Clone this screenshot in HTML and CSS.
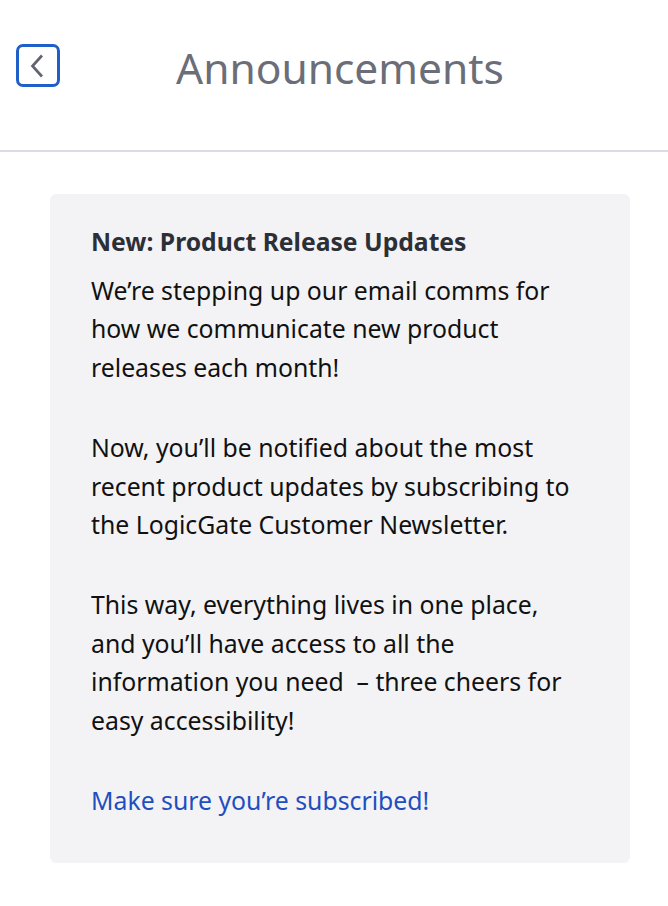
FILE: index.html
```html
<!DOCTYPE html>
<html lang="en">
<head>
    <meta charset="UTF-8">
    <meta name="viewport" content="width=device-width, initial-scale=1.0">
    <title>Announcements</title>
    <link rel="stylesheet" href="styles.css">
</head>
<body>
    <header class="topo">
        <button class="voltar" aria-label="Back">
            <svg width="14" height="24" viewBox="0 0 14 24">
                <path d="M12 1.5 L2.5 12 L12 22.5" fill="none" stroke="#62656f" stroke-width="2.7"/>
            </svg>
        </button>
        <h1>Announcements</h1>
    </header>

    <div class="cartao">
        <h2>New: Product Release Updates</h2>
        <p>We’re stepping up our email comms for how we communicate new product releases each month!</p>
        <p>Now, you’ll be notified about the most recent product updates by subscribing to the LogicGate Customer Newsletter.</p>
        <p>This way, everything lives in one place, and you’ll have access to all the information you need &nbsp;– three cheers for easy accessibility!</p>
        <p><a href="#">Make sure you’re subscribed!</a></p>
    </div>
</body>
</html>
```

FILE: styles.css
```css
body {
    margin: 0;
    font-family: "Noto Sans", sans-serif;
    background-color: #fff;
}
.topo {
    height: 150px;
    border-bottom: 2px solid #dcdde3;
    display: flex;
    align-items: flex-start;
    position: relative;
}
.voltar {
    margin: 44px 0 0 16px;
    width: 44px;
    height: 43px;
    border: 3px solid #1f5fc8;
    border-radius: 7px;
    background: #fff;
    padding: 0 3px 0 0;
    display: flex;
    align-items: center;
    justify-content: center;
    cursor: pointer;
}
.topo h1 {
    position: absolute;
    left: 12px;
    right: 0;
    top: 38px;
    margin: 0;
    text-align: center;
    font-size: 42.5px;
    line-height: 60px;
    font-weight: 400;
    color: #6b6e78;
}
.cartao {
    margin: 42px 38px 0 50px;
    background-color: #f3f3f6;
    border-radius: 6px;
    padding: 32px 54px 44px 41px;
}
.cartao h2 {
    margin: 0 0 13px 0;
    font-size: 24.7px;
    line-height: 32px;
    font-weight: 700;
    color: #2d2f36;
}
.cartao p {
    margin: 0 0 42px 0;
    font-size: 24.8px;
    line-height: 38.4px;
    color: #111;
}
.cartao p:last-child {
    margin-bottom: 0;
}
.cartao a {
    color: #1f4fbf;
    text-decoration: none;
}
```
